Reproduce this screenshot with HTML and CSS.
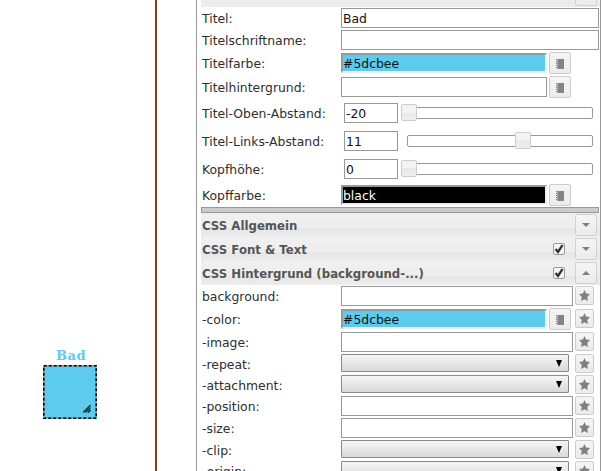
FILE: index.html
```
<!DOCTYPE html>
<html lang="de">
<head>
<meta charset="utf-8">
<title>Widget Editor</title>
<link rel="stylesheet" href="styles.css">
</head>
<body>
<svg class="defs" width="0" height="0">
  <symbol id="book" viewBox="0 0 10 10"><path fill="#848484" d="M3 0h6v10H3z"/><path fill="none" stroke="#777" stroke-width="1" stroke-dasharray="1 1" d="M1.5 0v10"/><path fill="#aaa" d="M2 0h1v10H2z"/></symbol>
  <symbol id="star" viewBox="0 0 10 10"><path fill="#808080" d="M5 0l1.5 3.2 3.5.5-2.5 2.6.6 3.7L5 8.3 1.9 10l.6-3.7L0 3.7l3.5-.5z"/></symbol>
  <symbol id="check" viewBox="0 0 12 12"><path fill="none" stroke="#333" stroke-width="2.4" d="M2.6 6l2.4 3 4.5-6.8"/></symbol>
</svg>
<div class="app">
  <main class="canvas">
    <div class="widget"><span class="widget-title">Bad</span><svg class="outline" width="54" height="54"><rect x="1.5" y="1.5" width="51" height="51" fill="none" stroke="#8a9ba4"/><rect x=".75" y=".75" width="52.5" height="52.5" fill="none" stroke="#000" stroke-width="1.5" stroke-dasharray="3 2"/></svg><svg class="grip" width="8" height="8"><path d="M0 7.5L7.5 0M2.5 7.5L7.5 2.5M5 7.5L7.5 5" stroke="#0a1a22" stroke-width="1.2" fill="none"/></svg></div>
  </main>
  <aside class="panel">
    <div class="head cut"><span class="btn toggle"></span></div>
    <div class="row"><label>Titel:</label><div class="field full">Bad</div></div>
    <div class="row"><label>Titelschriftname:</label><div class="field full"></div></div>
    <div class="row tall"><label>Titelfarbe:</label><div class="field color blue">#5dcbee</div><span class="btn pick"><svg><use href="#book"/></svg></span></div>
    <div class="row tall"><label>Titelhintergrund:</label><div class="field short"></div><span class="btn pick"><svg><use href="#book"/></svg></span></div>
    <div class="row slide"><label>Titel-Oben-Abstand:</label><div class="field num">-20</div><div class="track"><i class="handle"></i></div></div>
    <div class="row slide"><label>Titel-Links-Abstand:</label><div class="field num">11</div><div class="track"><i class="handle mid"></i></div></div>
    <div class="row slide"><label>Kopfhöhe:</label><div class="field num">0</div><div class="track"><i class="handle"></i></div></div>
    <div class="row tall"><label>Kopffarbe:</label><div class="field color black">black</div><span class="btn pick"><svg><use href="#book"/></svg></span></div>
    <div class="bar"></div>
    <div class="head"><b>CSS Allgemein</b><span class="btn toggle down"></span></div>
    <div class="head"><b>CSS Font &amp; Text</b><span class="box"><svg><use href="#check"/></svg></span><span class="btn toggle down"></span></div>
    <div class="head"><b>CSS Hintergrund (background-...)</b><span class="box"><svg><use href="#check"/></svg></span><span class="btn toggle up"></span></div>
    <div class="row"><label>background:</label><div class="field mid-w"></div><span class="btn fav"><svg><use href="#star"/></svg></span></div>
    <div class="row tall"><label>-color:</label><div class="field color blue">#5dcbee</div><span class="btn pick"><svg><use href="#book"/></svg></span><span class="btn fav"><svg><use href="#star"/></svg></span></div>
    <div class="row"><label>-image:</label><div class="field mid-w"></div><span class="btn fav"><svg><use href="#star"/></svg></span></div>
    <div class="row low"><label>-repeat:</label><div class="select"></div><span class="btn fav"><svg><use href="#star"/></svg></span></div>
    <div class="row low"><label>-attachment:</label><div class="select"></div><span class="btn fav"><svg><use href="#star"/></svg></span></div>
    <div class="row"><label>-position:</label><div class="field mid-w"></div><span class="btn fav"><svg><use href="#star"/></svg></span></div>
    <div class="row"><label>-size:</label><div class="field mid-w"></div><span class="btn fav"><svg><use href="#star"/></svg></span></div>
    <div class="row low"><label>-clip:</label><div class="select"></div><span class="btn fav"><svg><use href="#star"/></svg></span></div>
    <div class="row low"><label>-origin:</label><div class="select"></div><span class="btn fav"><svg><use href="#star"/></svg></span></div>
  </aside>
</div>
</body>
</html>
```
FILE: styles.css
```
* { box-sizing: border-box; }
body { margin: 0; background: #fff; font: 12.4px/16px "DejaVu Sans", sans-serif; color: #2e2e2e; overflow: hidden; }
.defs { position: absolute; }
.app { display: flex; width: 601px; height: 471px; overflow: hidden; }
.canvas { width: 157px; height: 471px; border-right: 2px solid #8b3a20; flex: none; position: relative; }
.widget { position: absolute; left: 43px; top: 365px; width: 54px; height: 54px; background: #5dcbee; }
.outline { position: absolute; left: 0; top: 0; }
.widget-title { position: absolute; left: 13px; top: -18px; font: bold 13px/18px "DejaVu Serif", serif; color: #5dcbee; letter-spacing: .6px; }
.grip { position: absolute; right: 6px; bottom: 6px; }
.panel { margin-left: 39px; width: 405px; flex: none; height: 485px; border-left: 1px solid #999; border-right: 1px solid #999; padding-left: 4px; }
.row { display: flex; align-items: center; height: 22px; }
.row.tall { height: 24px; }
.row.slide { height: 28px; }
.row.low { height: 21px; }
label { width: 140px; padding: 2px 0 0 1px; flex: none; white-space: nowrap; }
.field { height: 20px; border: 1px solid #999; background: #fff; color: #111; padding-left: 1px; line-height: 20px; flex: none; }
.full { width: 258px; }
.short, .color { width: 206px; }
.mid-w { width: 232px; }
.color { border: 2px solid; border-color: #999 #e2f1f7 #e2f1f7 #999; padding-left: 0; line-height: 18px; }
.blue { background: #5dcbee; }
.black { background: #000; color: #fff; border-color: #999 #eee #eee #999; }
.num { width: 54px; margin-left: 3px; }
.btn { display: flex; align-items: center; justify-content: center; border: 1px solid #ccc; border-radius: 2px; background: linear-gradient(#f5f5f5, #ebebeb); flex: none; }
.pick { width: 22px; height: 22px; margin-left: 2px; }
.pick svg { width: 10px; height: 10px; margin-top: 1px; }
.fav { width: 19px; height: 19px; margin: 1px 6px 0 auto; align-self: flex-start; }
.tall .fav { margin-top: 2px; }
.fav svg { width: 11px; height: 11px; }
.track { margin-left: 9px; width: 186px; height: 12px; border: 1px solid #999; border-radius: 2px; position: relative; }
.handle { position: absolute; left: -7px; top: -4px; width: 16px; height: 17px; border: 1px solid #ccc; border-radius: 2px; background: linear-gradient(#f4f4f4 50%, #e9e9e9 50%, #eee); }
.handle.mid { left: 107px; }
.bar { height: 6px; background: #ccc; border: 1px solid #999; margin-right: 1px; }
.head { display: flex; align-items: center; height: 24px; padding: 0 3px 0 1px; background: linear-gradient(#f0f0f0, #eee 60%, #e6e6e6 68%, #ededed); color: #555; }
.head.cut { height: 7px; align-items: flex-end; background: #ececec; padding-bottom: 1px; }
.head b { flex: 1; font-size: 11.75px; white-space: nowrap; padding-top: 1px; }
.toggle { width: 22px; height: 22px; margin: 0 0 0 auto; border-color: #d0d0d0; }
.down::before { content: ""; border: 4px solid transparent; border-top-color: #808080; border-bottom: 0; }
.up::before { content: ""; border: 4px solid transparent; border-bottom-color: #808080; border-top: 0; }
.box { width: 12px; height: 12px; border: 1px solid #999; border-radius: 2px; background: #f6f6f6; margin-right: 10px; display: flex; }
.box svg { width: 12px; height: 12px; margin: -1px; flex: none; overflow: visible; }
.select { width: 228px; height: 18px; border: 1px solid #888; border-radius: 1px; background: linear-gradient(#f6f6f6, #d9d9d9); display: flex; align-items: center; justify-content: flex-end; padding-right: 6px; align-self: flex-start; margin-top: 1px; }
.select::after { content: ""; border: 3.5px solid transparent; border-top: 7px solid #000; border-bottom: 0; }
```
